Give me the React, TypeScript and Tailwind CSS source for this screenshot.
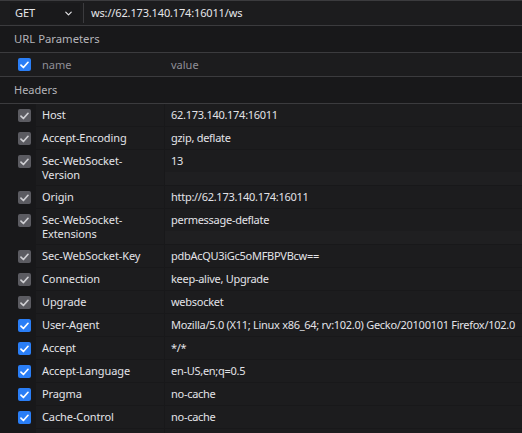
import React from 'react';
import { ChevronDown } from 'lucide-react';

interface Header {
  name: string[];
  value: string;
  enabled: boolean;
}

const headers: Header[] = [
  { name: ['Host'], value: '62.173.140.174:16011', enabled: false },
  { name: ['Accept-Encoding'], value: 'gzip, deflate', enabled: false },
  { name: ['Sec-WebSocket-', 'Version'], value: '13', enabled: false },
  { name: ['Origin'], value: 'http://62.173.140.174:16011', enabled: false },
  { name: ['Sec-WebSocket-', 'Extensions'], value: 'permessage-deflate', enabled: false },
  { name: ['Sec-WebSocket-Key'], value: 'pdbAcQU3iGc5oMFBPVBcw==', enabled: false },
  { name: ['Connection'], value: 'keep-alive, Upgrade', enabled: false },
  { name: ['Upgrade'], value: 'websocket', enabled: false },
  {
    name: ['User-Agent'],
    value: 'Mozilla/5.0 (X11; Linux x86_64; rv:102.0) Gecko/20100101 Firefox/102.0',
    enabled: true,
  },
  { name: ['Accept'], value: '*/*', enabled: true },
  { name: ['Accept-Language'], value: 'en-US,en;q=0.5', enabled: true },
  { name: ['Pragma'], value: 'no-cache', enabled: true },
  { name: ['Cache-Control'], value: 'no-cache', enabled: true },
  // next row is scrolled just past the bottom edge; only its checkbox peeks in
  { name: [''], value: '', enabled: true },
];

const Checkbox: React.FC<{ blue: boolean }> = ({ blue }) => (
  <div
    className={`w-[13px] h-[13px] rounded-[2px] flex items-center justify-center ${
      blue ? 'bg-[#2a7ef6]' : 'bg-[#5b5b61]'
    }`}
  >
    <svg width="9" height="8" viewBox="0 0 9 8" fill="none">
      <path
        d="M1 4.2 L3.4 6.5 L8 1.3"
        stroke={blue ? '#ffffff' : '#cfcfd3'}
        strokeWidth="1.7"
        strokeLinecap="round"
        strokeLinejoin="round"
      />
    </svg>
  </div>
);

const App: React.FC = () => {
  return (
    <div className="w-[522px] h-[433px] overflow-hidden bg-[#18181a] text-[11px] leading-[14px] text-[#e3e3e8] font-['Noto_Sans',sans-serif]">
      {/* Method + URL */}
      <div className="h-[26px] flex items-center bg-[#1c1c1e] border-t border-b border-[#3b3b3e]">
        <div className="ml-[10px] w-[70px] h-[21px] bg-[#19191b] flex items-center justify-between pl-[5px] pr-[6px]">
          <span className="text-[#e6e6ea]">GET</span>
          <ChevronDown className="w-[11px] h-[11px] text-[#e6e6ea]" strokeWidth={2.5} />
        </div>
        <div className="w-px h-[20px] bg-[#3b3b3e] ml-[3px]" />
        <span className="ml-[7px] text-[#e6e6ea] tracking-[-0.15px]">ws://62.173.140.174:16011/ws</span>
      </div>

      {/* URL Parameters */}
      <div className="h-[27px] flex items-center px-[14px] border-b border-[#3b3b3e] text-[11.3px] text-[#b4b4b9]">
        URL Parameters
      </div>
      <div className="h-[24px] flex items-center bg-[#1c1c1e] border-b border-[#3b3b3e]">
        <div className="w-[36px] pl-[18px]">
          <Checkbox blue />
        </div>
        <span className="w-[129px] pl-[6px] text-[#8f8f97]">name</span>
        <span className="pl-[6px] text-[#8f8f97]">value</span>
      </div>

      {/* Headers */}
      <div className="h-[27px] flex items-center px-[14px] border-b border-[#3b3b3e] text-[11px] text-[#b4b4b9]">
        Headers
      </div>
      <div className="flex flex-col gap-px">
        {headers.map((h, idx) => (
          <div key={idx} className="flex">
            <div className="w-[36px] shrink-0 pl-[18px] pt-[5px]">
              <Checkbox blue={h.enabled} />
            </div>
            <div className="w-[128px] shrink-0 bg-[#1c1c1e] px-[6px] py-[4px] tracking-[-0.1px]">
              {h.name.map((line, i) => (
                <div key={i} className={i > 0 ? 'h-[13px] leading-[13px]' : 'h-[14px]'}>
                  {line}
                </div>
              ))}
            </div>
            <div className="flex-1 min-w-0 ml-px flex flex-col bg-[#1f1f21]">
              <div className="h-[22px] flex items-center px-[6px] bg-[#1c1c1e] whitespace-nowrap overflow-hidden tracking-[-0.28px]">
                {h.value}
              </div>
            </div>
          </div>
        ))}
      </div>
    </div>
  );
};

export default App;
